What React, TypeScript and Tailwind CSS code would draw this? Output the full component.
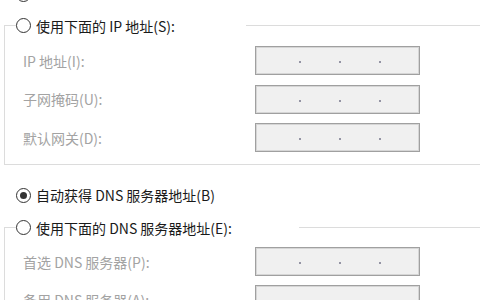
import React from 'react';

const font = { fontFamily: '"Noto Sans CJK SC", "Noto Sans", sans-serif' };

function Radio({ checked = false }: { checked?: boolean }) {
  return (
    <span className="w-[15px] h-[15px] shrink-0 rounded-full border-[1.5px] border-[#333] bg-white flex items-center justify-center">
      {checked && <span className="w-[7px] h-[7px] rounded-full bg-[#333]" />}
    </span>
  );
}

function RadioRow({ label, checked, className = '' }: { label: string; checked?: boolean; className?: string }) {
  return (
    <div className={`flex items-center gap-[5px] h-[20px] ml-3 text-[#1a1a1a] ${className}`}>
      <Radio checked={checked} />
      <span>{label}</span>
    </div>
  );
}

function IpInput() {
  return (
    <div className="w-[165px] h-[29px] border border-[#a0a0a0] bg-[#f0f0f0] shadow-[inset_0_0_0_1px_#d6d6d6] flex items-center pl-[43px] pt-[3px] gap-[38px]">
      <span className="w-[2px] h-[2px] bg-[#9494a4]" />
      <span className="w-[2px] h-[2px] bg-[#9494a4]" />
      <span className="w-[2px] h-[2px] bg-[#9494a4]" />
    </div>
  );
}

function FieldRow({ label }: { label: string }) {
  return (
    <div className="flex items-center h-[29px]">
      <span className="w-[232px] text-[#a3a3a3]">{label}</span>
      <IpInput />
    </div>
  );
}

export default function App() {
  return (
    <div className="w-[480px] h-[300px] overflow-hidden bg-white text-[14px] leading-[20px]" style={font}>
      <div className="flex flex-col pl-1">
        {/* 上方只露出半个单选框 */}
        <div className="flex items-center h-[20px] ml-3 -mt-[15.5px]">
          <Radio />
        </div>

        {/* 手动 IP */}
        <fieldset className="mt-[11px] w-[520px] border border-[#dcdcdc] p-0 m-0">
          <legend className="ml-[11px] w-[230px] p-0">
            <div className="flex items-center gap-[5px] h-[20px] text-[#1a1a1a]">
              <Radio />
              <span>使用下面的 IP 地址(S):</span>
            </div>
          </legend>
          <div className="flex flex-col gap-[9.5px] pt-[10.5px] pb-[12px] pl-[18px]">
            <FieldRow label="IP 地址(I):" />
            <FieldRow label="子网掩码(U):" />
            <FieldRow label="默认网关(D):" />
          </div>
        </fieldset>

        <RadioRow label="自动获得 DNS 服务器地址(B)" checked className="mt-[20px]" />

        {/* 手动 DNS */}
        <fieldset className="mt-[12.5px] w-[520px] border border-[#dcdcdc] p-0 m-0">
          <legend className="ml-[11px] w-[283px] p-0">
            <div className="flex items-center gap-[5px] h-[20px] text-[#1a1a1a]">
              <Radio />
              <span>使用下面的 DNS 服务器地址(E):</span>
            </div>
          </legend>
          <div className="flex flex-col gap-[9px] pt-[9.5px] pb-[12px] pl-[18px]">
            <FieldRow label="首选 DNS 服务器(P):" />
            <FieldRow label="备用 DNS 服务器(A):" />
          </div>
        </fieldset>
      </div>
    </div>
  );
}
